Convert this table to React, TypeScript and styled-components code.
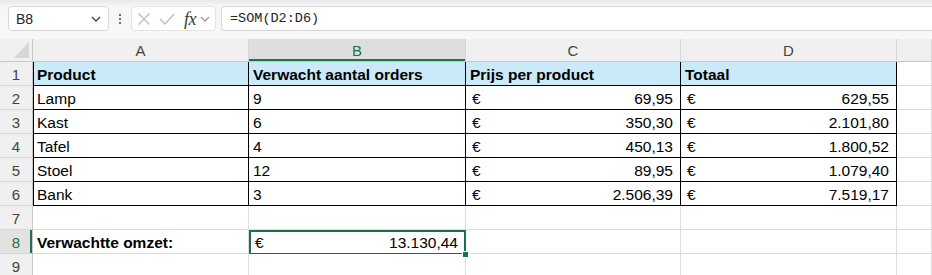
import React from "react"
import styled, { createGlobalStyle, css } from "styled-components"

const GREEN = "#1e7145"
const GRID = "#dcdcdc"
const INK = "#000"

const GlobalStyle = createGlobalStyle`
  html, body {
    margin: 0;
    padding: 0;
    background: #fff;
    overflow: hidden;
  }
  body {
    font-family: "Liberation Sans", Arial, sans-serif;
  }
  *, *::before, *::after {
    box-sizing: border-box;
  }
`

type CellData = {
  text?: string
  amount?: string
  bold?: boolean
}

const COLUMNS = ["A", "B", "C", "D", ""]
const COLUMN_WIDTHS = [216, 217, 215, 216]

const ROWS: CellData[][] = [
  [
    { text: "Product", bold: true },
    { text: "Verwacht aantal orders", bold: true },
    { text: "Prijs per product", bold: true },
    { text: "Totaal", bold: true },
  ],
  [{ text: "Lamp" }, { text: "9" }, { amount: "69,95" }, { amount: "629,55" }],
  [{ text: "Kast" }, { text: "6" }, { amount: "350,30" }, { amount: "2.101,80" }],
  [{ text: "Tafel" }, { text: "4" }, { amount: "450,13" }, { amount: "1.800,52" }],
  [{ text: "Stoel" }, { text: "12" }, { amount: "89,95" }, { amount: "1.079,40" }],
  [{ text: "Bank" }, { text: "3" }, { amount: "2.506,39" }, { amount: "7.519,17" }],
  [],
  [{ text: "Verwachtte omzet:", bold: true }, { amount: "13.130,44" }],
  [],
]

const TABLE_ROWS = 6
const TABLE_COLS = 4
const ACTIVE_ROW = 8
const ACTIVE_COL = 1

/* ---------- formula bar ---------- */

const Toolbar = styled.div`
  height: 39px;
  display: flex;
  align-items: flex-start;
  padding: 6px 0 0 8px;
  background: linear-gradient(#e8e8e8, #f6f6f6 6px, #f8f8f8);
`

const NameBox = styled.div`
  width: 101px;
  height: 25px;
  display: flex;
  align-items: center;
  justify-content: space-between;
  padding: 0 7px 0 7px;
  background: #fff;
  border: 1px solid #d6d6d6;
  border-radius: 4px;
  font-size: 14px;
  color: #242424;
`

const Dots = styled.div`
  width: 22px;
  height: 25px;
  display: flex;
  flex-direction: column;
  align-items: center;
  justify-content: center;
  gap: 2px;

  span {
    width: 2px;
    height: 2px;
    border-radius: 1px;
    background: #424242;
  }
`

const FunctionBox = styled.div`
  width: 85px;
  height: 25px;
  display: flex;
  align-items: center;
  padding: 0 4px 0 5px;
  gap: 8px;
  background: #fff;
  border: 1px solid #e3e3e3;
  border-radius: 4px;
`

const Fx = styled.span`
  font-family: "Liberation Serif", "Times New Roman", serif;
  font-style: italic;
  font-size: 18px;
  color: #3a3a3a;
  margin-left: 1px;
  margin-right: -4px;
  letter-spacing: -0.5px;
  line-height: 1;
`

const FormulaInput = styled.div`
  flex: 1;
  height: 25px;
  margin-left: 5px;
  display: flex;
  align-items: center;
  padding-left: 8px;
  background: #fff;
  border: 1px solid #d6d6d6;
  border-right: none;
  border-radius: 4px 0 0 4px;
  font-family: "Liberation Mono", "Courier New", monospace;
  font-size: 13.5px;
  color: #242424;
`

const Chevron: React.FC<{ color: string }> = ({ color }) => (
  <svg width="10" height="6" viewBox="0 0 10 6">
    <polyline points="1,1 5,5 9,1" fill="none" stroke={color} strokeWidth="1.3" />
  </svg>
)

const CancelIcon = () => (
  <svg width="14" height="14" viewBox="0 0 14 14">
    <path d="M1.5 1.5 L12.5 12.5 M12.5 1.5 L1.5 12.5" stroke="#bdbdbd" strokeWidth="1.3" />
  </svg>
)

const EnterIcon = () => (
  <svg width="16" height="14" viewBox="0 0 16 14">
    <polyline points="1,7 6,12 15,2" fill="none" stroke="#bdbdbd" strokeWidth="1.3" />
  </svg>
)

/* ---------- sheet ---------- */

const Sheet = styled.div`
  display: grid;
  grid-template-columns: 33px ${COLUMN_WIDTHS.map((w) => `${w}px`).join(" ")} 1fr;
  grid-template-rows: 23px repeat(9, 24px);
  font-size: 15.5px;
`

const Corner = styled.div`
  position: relative;
  background: #f0f0f0;
  border-right: 1px solid #c8c8c8;
  border-bottom: 1px solid #c8c8c8;

  &::after {
    content: "";
    position: absolute;
    right: 3px;
    bottom: 3px;
    width: 15px;
    height: 16px;
    background: #d7d7d7;
    clip-path: polygon(100% 0, 100% 100%, 0 100%);
  }
`

const ColHeader = styled.div<{ $active?: boolean }>`
  display: flex;
  align-items: center;
  justify-content: center;
  padding-top: 1px;
  background: ${(p) => (p.$active ? "#dedede" : "#f0f0f0")};
  border-right: 1px solid #d6d6d6;
  border-bottom: 1px solid #c8c8c8;
  color: ${(p) => (p.$active ? GREEN : "#444")};
  font-size: 15px;
  ${(p) =>
    p.$active &&
    css`
      box-shadow: inset 0 -2px 0 ${GREEN};
    `}
`

const RowHeader = styled.div<{ $active?: boolean }>`
  display: flex;
  align-items: center;
  justify-content: center;
  padding-top: 2px;
  background: ${(p) => (p.$active ? "#e2e2e2" : "#f0f0f0")};
  border-right: 1px solid #c8c8c8;
  border-bottom: 1px solid #d6d6d6;
  color: ${(p) => (p.$active ? GREEN : "#444")};
  font-size: 15px;
  ${(p) =>
    p.$active &&
    css`
      box-shadow: inset -2px 0 0 ${GREEN};
    `}
`

const Cell = styled.div<{
  $ruled?: boolean
  $leftRule?: boolean
  $fill?: boolean
  $bold?: boolean
  $selected?: boolean
}>`
  position: relative;
  display: flex;
  align-items: flex-end;
  justify-content: space-between;
  padding: 0 7px 1px 4px;
  line-height: 18px;
  white-space: nowrap;
  color: #000;
  font-weight: ${(p) => (p.$bold ? 700 : 400)};
  background: ${(p) => (p.$fill ? "#caeaf9" : "#fff")};
  border-right: 1px solid ${(p) => (p.$ruled ? INK : GRID)};
  border-bottom: 1px solid ${(p) => (p.$ruled ? INK : GRID)};
  ${(p) =>
    p.$leftRule &&
    css`
      box-shadow: inset 1px 0 0 ${INK};
    `}
  ${(p) =>
    p.$selected &&
    css`
      &::after {
        content: "";
        position: absolute;
        top: 0;
        left: 0;
        right: -1px;
        bottom: -2px;
        border: 2px solid ${GREEN};
        pointer-events: none;
      }
      &::before {
        content: "";
        position: absolute;
        right: -4px;
        bottom: -5px;
        width: 7px;
        height: 7px;
        background: ${GREEN};
        border: 1px solid #fff;
        z-index: 1;
      }
    `}
`

const Euro = styled.span`
  padding-left: 2px;
`

const SheetRow: React.FC<{ index: number; cells: CellData[] }> = ({ index, cells }) => {
  const rowNo = index + 1
  const inTable = rowNo <= TABLE_ROWS
  return (
    <>
      <RowHeader $active={rowNo === ACTIVE_ROW}>{rowNo}</RowHeader>
      {COLUMNS.map((_, col) => {
        const data = cells[col] || {}
        const ruled = inTable && col < TABLE_COLS
        return (
          <Cell
            key={col}
            $ruled={ruled}
            $leftRule={ruled && col === 0}
            $fill={rowNo === 1 && col < TABLE_COLS}
            $bold={data.bold}
            $selected={rowNo === ACTIVE_ROW && col === ACTIVE_COL}
          >
            {data.amount ? (
              <>
                <Euro>€</Euro>
                <span>{data.amount}</span>
              </>
            ) : (
              <span>{data.text}</span>
            )}
          </Cell>
        )
      })}
    </>
  )
}

export default function App() {
  return (
    <>
      <GlobalStyle />
      <Toolbar>
        <NameBox>
          <span>B8</span>
          <Chevron color="#424242" />
        </NameBox>
        <Dots>
          <span />
          <span />
          <span />
        </Dots>
        <FunctionBox>
          <CancelIcon />
          <EnterIcon />
          <Fx>fx</Fx>
          <Chevron color="#9a9a9a" />
        </FunctionBox>
        <FormulaInput>=SOM(D2:D6)</FormulaInput>
      </Toolbar>
      <Sheet>
        <Corner />
        {COLUMNS.map((letter, i) => (
          <ColHeader key={i} $active={i === ACTIVE_COL}>
            {letter}
          </ColHeader>
        ))}
        {ROWS.map((cells, i) => (
          <SheetRow key={i} index={i} cells={cells} />
        ))}
      </Sheet>
    </>
  )
}
